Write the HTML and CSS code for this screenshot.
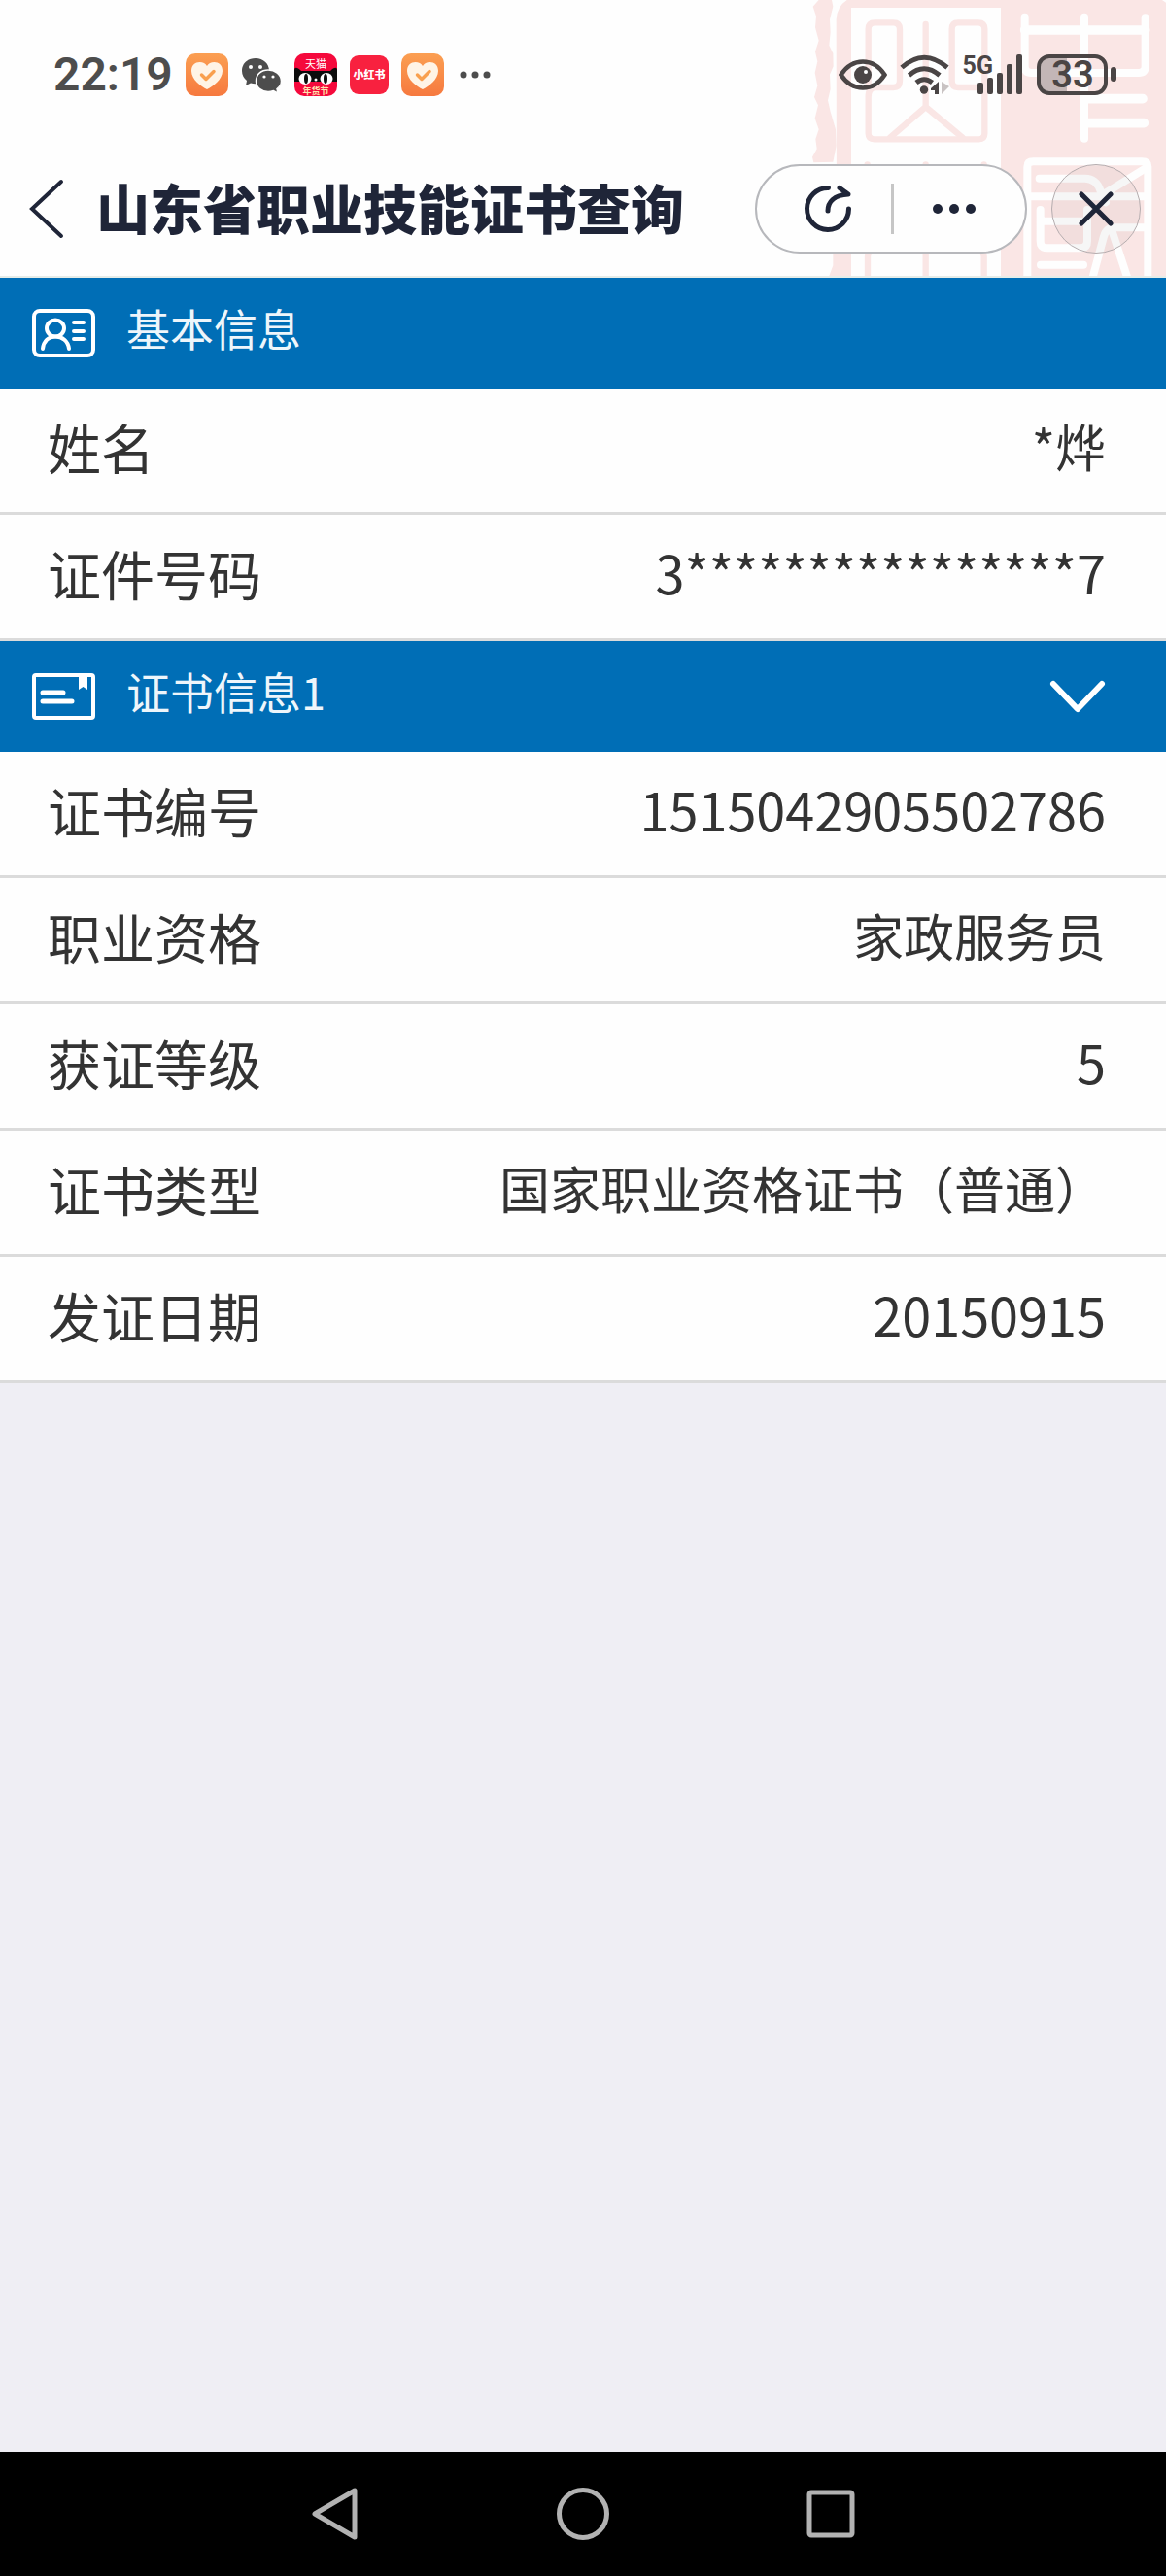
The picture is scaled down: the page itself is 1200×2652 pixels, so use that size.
FILE: index.html
```html
<!DOCTYPE html>
<html lang="zh-CN">
<head>
    <meta charset="UTF-8">
    <meta name="viewport" content="width=device-width, initial-scale=1.0">
    <title>山东省职业技能证书查询</title>
    <link rel="stylesheet" href="styles.css">
</head>
<body>
    <!-- Shared app icon -->
    <svg class="defs" width="0" height="0" aria-hidden="true">
        <defs>
            <linearGradient id="orange" x1="0" y1="0" x2="0" y2="1">
                <stop offset="0" stop-color="#fb9f52"/>
                <stop offset="1" stop-color="#f6793f"/>
            </linearGradient>
            <symbol id="heartApp" viewBox="0 0 44 44">
                <rect width="44" height="44" rx="10" fill="url(#orange)"/>
                <path d="M22 37C16 34 6 27 6 18C6 12 10 9 14.500 9C18 9 20.500 10.500 22 13C23.500 10.500 26 9 29.500 9C34 9 38 12 38 18C38 27 28 34 22 37Z" fill="#fff4e6"/>
                <path d="M16.500 22L21 26.500L29 18.500" fill="none" stroke="#f9a04e" stroke-width="3.500" stroke-linecap="round" stroke-linejoin="round"/>
            </symbol>
        </defs>
    </svg>

    <header class="header">
        <!-- Seal watermark -->
        <svg class="seal" viewBox="0 0 1200 852" width="400" height="284" aria-hidden="true">
            <g fill="#fae6e5">
                <path d="M128 0H168L172 20L162 60L164 100L160 140L172 165L173 205L162 230L164 275L156 310L164 345L180 400L182 450L172 500L112 502L108 485L122 460L118 430L128 400L116 365L126 325L114 300L124 265L116 225L124 190L117 160L128 125L117 85L120 50L110 20Z"/>
                <path d="M182 60Q184 20 215 0H1188L1200 8V852H160L172 820V785L183 780Z"/>
            </g>
            <rect x="228" y="24" width="462" height="828" fill="#fefefe"/>
            <g fill="none" stroke="#fae6e5" stroke-width="19" stroke-linejoin="round" stroke-linecap="round">
                <path d="M281 270V90Q281 70 301 70H358Q378 70 378 90V250Q378 270 358 270H301Q281 272 281 300V412Q281 430 300 430H622Q640 430 640 412V90Q640 70 620 70H558Q539 70 539 90V250Q539 270 558 270H640"/>
                <path d="M458 75V330L348 425M458 330L572 425"/>
                <path d="M278 508V530M458 508V530M638 508V530"/>
                <path d="M279 852V792Q279 775 296 775H622Q638 775 638 792V852M458 775V852"/>
            </g>
            <g fill="none" stroke="#fefefe" stroke-width="24" stroke-linejoin="round" stroke-linecap="round">
                <path d="M764 53V205Q764 225 784 225H1116Q1136 225 1136 205V55M948 53V428"/>
                <path d="M764 93H1136M950 305H1128M950 380H1132" stroke-width="29"/>
                <path d="M772 860V515Q772 499 790 499H1126Q1144 499 1144 515V860"/>
                <path d="M809 551H950Q985 551 998 590L1014 625M1136 520L1004 602M784 607H1140M812 648V745Q812 766 834 766H936Q957 766 957 745V648M824 683H957M813 818H945M1140 703H1042Q1016 703 1008 730L975 852M1034 715L1079 852"/>
            </g>
        </svg>

        <div class="status-bar">
            <div class="status-left">
                <span class="clock">22:19</span>
                <svg width="44" height="44" aria-hidden="true"><use href="#heartApp"/></svg>
                <svg viewBox="0 0 42 36" width="42" height="36" aria-hidden="true">
                    <path d="M15 1C6.500 1 1 6.500 1 14C1 18.500 3 21.500 6 24L5 29L10 26.500C12 27 14 27.500 16 27.200C22 27 29 22 29 14C29 6.500 23 1 15 1Z" fill="#4d4d4d"/>
                    <path d="M28 13C21 13 15.500 17.500 15.500 24.500C15.500 31 21 35.500 28 35.500C30 35.500 32 35 33.500 34.500L38 37L37 32.500C40 30.500 41.500 28 41.500 24.500C41.500 17.500 35 13 28 13Z" fill="#4d4d4d" stroke="#fefefe" stroke-width="1.500"/>
                    <g fill="#fefefe"><circle cx="10" cy="10" r="2"/><circle cx="20" cy="10" r="2"/><circle cx="24" cy="20" r="1.600"/><circle cx="33" cy="20" r="1.600"/></g>
                </svg>
                <svg viewBox="0 0 44 44" width="44" height="44" aria-hidden="true">
                    <rect width="44" height="44" rx="10" fill="#f5093c"/>
                    <path d="M0 29V17C0 14 3 14 7 18H37C41 14 44 14 44 17V29Z" fill="#0c0c0c"/>
                    <ellipse cx="11" cy="26" rx="6.500" ry="6" fill="#fff"/>
                    <ellipse cx="33" cy="26" rx="6.500" ry="6" fill="#fff"/>
                    <ellipse cx="12" cy="26" rx="2" ry="5" fill="#0c0c0c"/>
                    <ellipse cx="32" cy="26" rx="2" ry="5" fill="#0c0c0c"/>
                    <circle cx="22" cy="27" r="1.500" fill="#fff"/>
                    <text class="app-text" x="22" y="15" font-size="11">天猫</text>
                    <text class="app-text app-text-gold" x="22" y="42" font-size="9">年货节</text>
                </svg>
                <svg viewBox="0 0 40 40" width="40" height="40" aria-hidden="true">
                    <rect width="40" height="40" rx="9" fill="#f8213f"/>
                    <text class="app-text app-text-bold" x="20" y="24" font-size="11">小红书</text>
                </svg>
                <svg width="44" height="44" aria-hidden="true"><use href="#heartApp"/></svg>
                <svg class="more" viewBox="0 0 32 8" width="32" height="8" fill="#4d4d4d" aria-hidden="true">
                    <circle cx="4" cy="4" r="3.500"/><circle cx="16" cy="4" r="3.500"/><circle cx="28" cy="4" r="3.500"/>
                </svg>
            </div>
            <div class="status-right">
                <svg viewBox="0 0 50 32" width="50" height="32" aria-hidden="true">
                    <path d="M2.500 16C9 6 17 2.500 25 2.500S41 6 47.500 16C41 26 33 29.500 25 29.500S9 26 2.500 16Z" fill="none" stroke="#4a4545" stroke-width="4.500"/>
                    <circle cx="25" cy="16" r="9" fill="#4a4545"/><circle cx="28" cy="13" r="2" fill="#fefefe"/>
                </svg>
                <svg viewBox="0 0 52 42" width="52" height="42" aria-hidden="true">
                    <g fill="none" stroke="#4a4545" stroke-width="5">
                        <path d="M2 13.500Q25 -7 49 13.500M9.500 21.500Q25 8 41 21.500M17 29Q25 22.500 33.500 29"/>
                    </g>
                    <circle cx="25" cy="36.500" r="4.200" fill="#4a4545"/>
                    <path d="M40 28V41H36V37H32V35Z" fill="#4a4545"/><path d="M43 28V41L51 33Z" fill="#c9c3c3"/>
                </svg>
                <div class="signal">
                    <span class="network">5G</span>
                    <svg viewBox="0 0 48 42" width="48" height="42" fill="#4a4545" aria-hidden="true">
                        <rect x="0" y="29" width="6" height="12" rx="2"/><rect x="10" y="24" width="6" height="17" rx="2"/>
                        <rect x="20" y="19" width="6" height="22" rx="2"/><rect x="30" y="10" width="6" height="31" rx="2"/>
                        <rect x="40" y="0" width="6" height="41" rx="2"/>
                    </svg>
                </div>
                <svg viewBox="0 0 82 42" width="82" height="42" aria-label="33%">
                    <path d="M14 1H31V41H14Q1 41 1 28V14Q1 1 14 1Z" fill="#c3b6b6"/>
                    <rect x="2" y="2" width="69" height="38" rx="11" fill="none" stroke="#4a4545" stroke-width="4"/>
                    <rect x="76" y="13" width="6" height="15" rx="3" fill="#4a4545"/>
                    <text class="battery-text" x="37" y="34">33</text>
                </svg>
            </div>
        </div>

        <div class="title-bar">
            <button class="icon-button" aria-label="返回">
                <svg viewBox="0 0 36 62" width="36" height="62" fill="none" stroke="#1f2538" stroke-width="4" stroke-linecap="round"><path d="M33 3L3 31L33 59"/></svg>
            </button>
            <h1>山东省职业技能证书查询</h1>
            <div class="capsule">
                <button class="icon-button" aria-label="刷新">
                    <svg viewBox="0 0 50 50" width="50" height="50" fill="none" stroke="#1f2538" stroke-width="5" stroke-linecap="round" stroke-linejoin="round">
                        <path d="M25.500 3.500A21.500 21.500 0 1 0 46.500 25M25 27C25 18 31 11 46 10L37 3.500"/>
                    </svg>
                </button>
                <span class="divider"></span>
                <button class="icon-button" aria-label="更多">
                    <svg viewBox="0 0 46 12" width="46" height="12" fill="#1f2538"><circle cx="6" cy="6" r="5"/><circle cx="23" cy="6" r="5"/><circle cx="40" cy="6" r="5"/></svg>
                </button>
            </div>
            <button class="icon-button close" aria-label="关闭">
                <svg viewBox="0 0 36 36" width="36" height="36" stroke="#1f2538" stroke-width="5" stroke-linecap="round"><path d="M3 3L33 33M33 3L3 33"/></svg>
            </button>
        </div>
    </header>

    <main class="content">
        <section>
            <div class="section-head">
                <svg viewBox="0 0 66 50" width="66" height="50" fill="none" stroke="#fff" stroke-width="4" stroke-linecap="round" aria-hidden="true">
                    <rect x="3" y="2" width="61" height="46" rx="6"/>
                    <ellipse cx="25" cy="20" rx="9" ry="8.500"/>
                    <path d="M12 41C13 33 18 28.500 25 28.500S38 33 39 41M44 14H54M44 23H54M44 31H54"/>
                </svg>
                <h2>基本信息</h2>
            </div>
            <dl class="info">
                <div class="row"><dt>姓名</dt><dd>*烨</dd></div>
                <div class="row"><dt>证件号码</dt><dd class="number">3****************7</dd></div>
            </dl>
        </section>

        <section>
            <div class="section-head">
                <svg viewBox="0 0 66 50" width="66" height="50" fill="none" stroke="#fff" stroke-linecap="round" aria-hidden="true">
                    <rect x="3" y="3" width="61" height="44" rx="2" stroke-width="4"/>
                    <path d="M12 21H33M12 30H42" stroke-width="5"/>
                    <path d="M49 3H58V18L53.500 15L49 18Z" fill="#fff" stroke="none"/>
                </svg>
                <h2>证书信息1</h2>
                <button class="icon-button toggle" aria-label="收起">
                    <svg viewBox="0 0 58 34" width="58" height="34" fill="none" stroke="#fff" stroke-width="6" stroke-linecap="round" stroke-linejoin="round"><path d="M4 4L29 30L54 4"/></svg>
                </button>
            </div>
            <dl class="info">
                <div class="row"><dt>证书编号</dt><dd class="number">1515042905502786</dd></div>
                <div class="row"><dt>职业资格</dt><dd>家政服务员</dd></div>
                <div class="row"><dt>获证等级</dt><dd class="number">5</dd></div>
                <div class="row"><dt>证书类型</dt><dd>国家职业资格证书（普通）</dd></div>
                <div class="row"><dt>发证日期</dt><dd class="number">20150915</dd></div>
            </dl>
        </section>
    </main>

    <nav class="nav-bar">
        <button class="icon-button" aria-label="后退">
            <svg viewBox="0 0 54 54" width="54" height="54" fill="none" stroke="#b2b2b2" stroke-width="5" stroke-linejoin="round"><path d="M48 3V51L7 27Z"/></svg>
        </button>
        <button class="icon-button" aria-label="主页">
            <svg viewBox="0 0 54 54" width="54" height="54" fill="none" stroke="#b2b2b2" stroke-width="5"><circle cx="27" cy="27" r="24.500"/></svg>
        </button>
        <button class="icon-button" aria-label="最近任务">
            <svg viewBox="0 0 54 54" width="54" height="54" fill="none" stroke="#b2b2b2" stroke-width="5"><rect x="4" y="5" width="44" height="44" rx="2"/></svg>
        </button>
    </nav>
</body>
</html>
```

FILE: styles.css
```css
* {
    box-sizing: border-box;
}
body {
    margin: 0;
    min-height: 100vh;
    display: flex;
    flex-direction: column;
    background-color: #efeef4;
    color: #333;
    font-family: "Noto Sans CJK SC", sans-serif;
}
h1, h2, dl, dd {
    margin: 0;
}
svg {
    display: block;
    flex-shrink: 0;
}
.defs {
    position: absolute;
}
.icon-button {
    display: flex;
    align-items: center;
    justify-content: center;
    flex-shrink: 0;
    padding: 0;
    border: none;
    background: none;
    cursor: pointer;
}

/* Header */
.header {
    position: relative;
    padding-bottom: 7px;
    background-color: #fefefe;
    border-bottom: 2px solid #e6ece8;
}
.seal {
    position: absolute; /* watermark behind the bars */
    top: 0;
    right: 0;
}
.status-bar {
    position: relative;
    display: flex;
    align-items: center;
    justify-content: space-between;
    height: 152px;
    padding: 2px 51px 0 55px;
}
.status-left, .status-right {
    display: flex;
    align-items: center;
    gap: 13px;
}
.clock {
    font-family: Roboto, sans-serif;
    font-size: 48px;
    font-weight: 600;
    line-height: 52px;
    color: #4d4d4d;
}
.more {
    margin-left: 3px;
}
.app-text {
    font-family: "Noto Sans CJK SC", sans-serif;
    fill: #fff;
    text-anchor: middle;
}
.app-text-gold {
    fill: #ffe3b0;
    font-weight: bold;
}
.app-text-bold {
    font-weight: 900;
}
.signal {
    display: flex;
    align-items: flex-start;
}
.network {
    margin-right: -16px; /* sits over the short bars */
    font-family: Roboto, sans-serif;
    font-size: 25px;
    font-weight: bold;
    line-height: 24px;
    color: #4a4545;
}
.battery-text {
    font-family: Roboto, sans-serif;
    font-size: 38px;
    font-weight: 600;
    fill: #4a4545;
    text-anchor: middle;
}
.title-bar {
    position: relative;
    display: flex;
    align-items: center;
    height: 125px;
    padding: 0 26px 0 30px;
}
.title-bar h1 {
    flex: 1;
    padding: 0 0 6px 33px;
    font-size: 55px;
    font-weight: 900;
    line-height: 80px;
    color: #1f2538;
    white-space: nowrap;
}
.capsule {
    display: flex;
    align-items: center;
    justify-content: space-between;
    width: 280px;
    height: 92px;
    padding: 0 50px 0 48px;
    background-color: #fefefe;
    border: 2px solid #b7b8bc;
    border-radius: 46px;
}
.divider {
    width: 3px;
    height: 52px;
    background-color: #c6c6c6;
}
.close {
    width: 92px;
    height: 92px;
    margin-left: 25px;
    background-color: rgba(0, 0, 0, 0.03);
    border: 1px solid #b5adaf;
    border-radius: 50%;
}

/* Sections */
.content {
    flex: 1;
}
.section-head {
    display: flex;
    align-items: center;
    gap: 32px;
    height: 114px;
    padding: 0 62px 0 32px;
    background-color: #006eb6;
    color: #eef6fb;
}
.section-head h2 {
    padding-bottom: 10px;
    font-size: 45px;
    font-weight: normal;
    line-height: 66px;
}
.toggle {
    margin-left: auto;
}
.row {
    display: flex;
    align-items: center;
    justify-content: space-between;
    height: 130px;
    padding: 0 62px 10px 49px;
    background-color: #fefefe;
    border-bottom: 3px solid #dbdbdb;
}
.row dt {
    font-size: 55px;
    line-height: 80px;
}
.row dd {
    font-size: 52px;
    line-height: 80px;
}
.row .number {
    font-size: 54px;
}

/* System navigation */
.nav-bar {
    display: flex;
    align-items: center;
    justify-content: space-around;
    height: 128px;
    padding: 0 18%;
    background-color: #000;
}
```
